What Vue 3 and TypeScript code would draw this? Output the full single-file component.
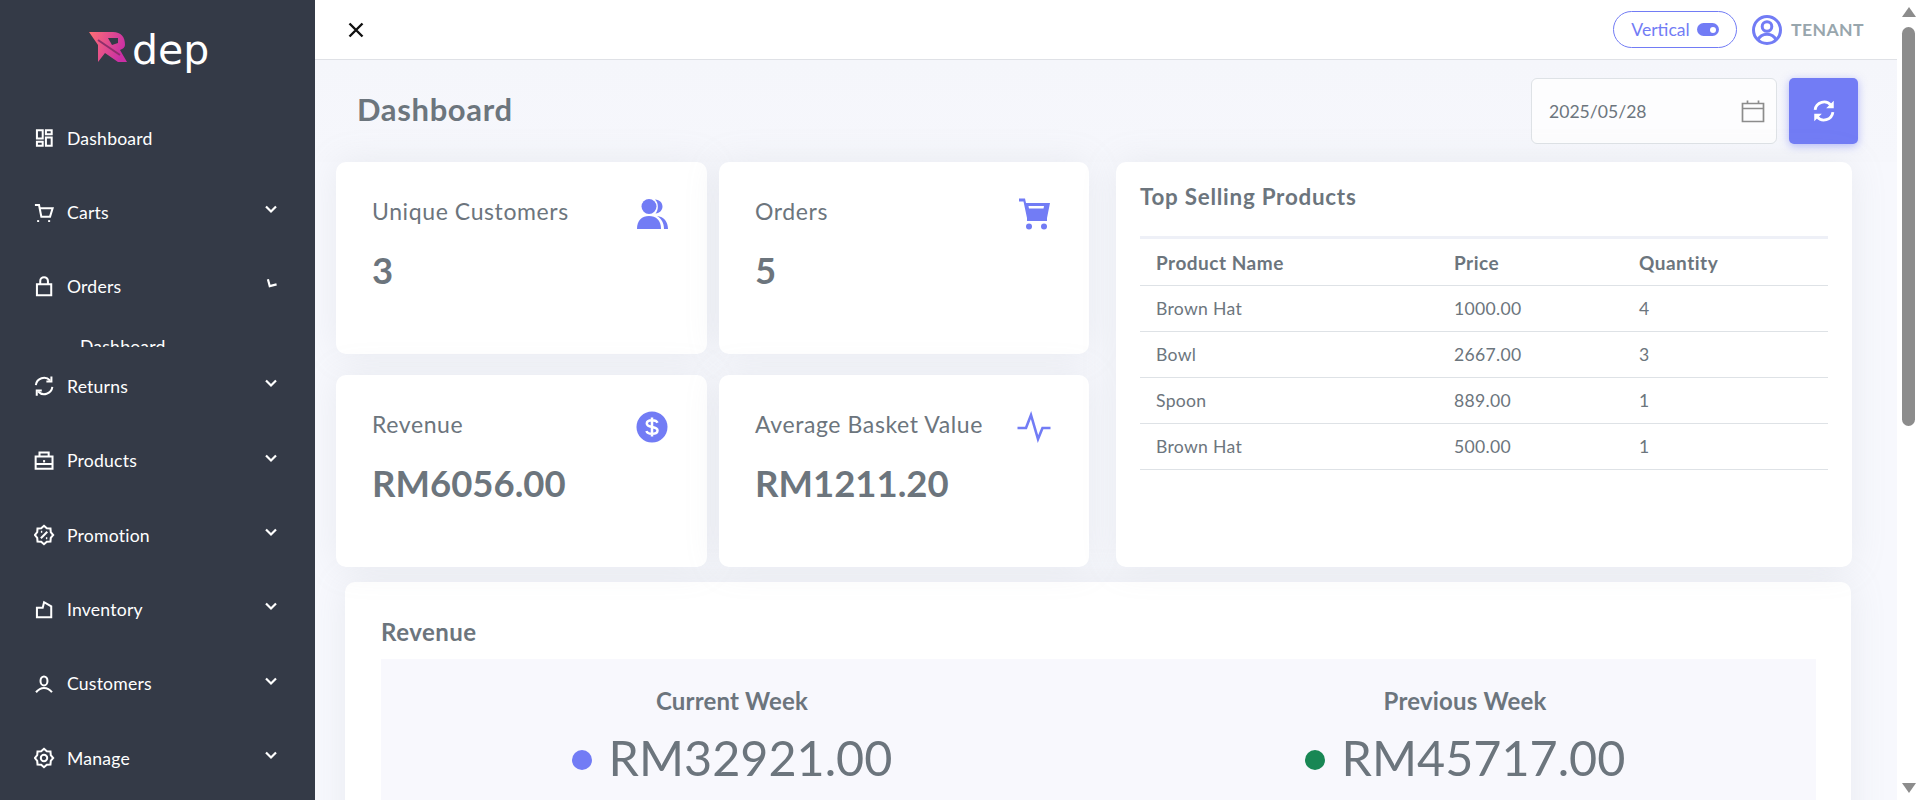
<template>
  <div class="layout">
    <aside class="sidebar">
      <div class="logo">
        <svg class="logo-mark" width="38" height="30" viewBox="0 0 38 30">
          <defs>
            <linearGradient id="rg" x1="0" y1="0" x2="1" y2="0.3">
              <stop offset="0" stop-color="#ff6f73" />
              <stop offset="1" stop-color="#c92fa5" />
            </linearGradient>
          </defs>
          <path fill="url(#rg)" d="M0 0H24C32 0 36 5 36 13C36 15 34 17 31 18L38 30H29L16 21L9 30V13Z" />
          <path fill="#343a47" d="M19 6H29V11L23 13Z" />
          <path fill="none" stroke="#8e2f6b" stroke-width="2" d="M9 8L31 23" />
        </svg>
        <span class="logo-text">dep</span>
      </div>
      <nav class="menu">
        <template v-for="item in menu" :key="item.name">
          <div class="menu-item">
            <svg class="menu-icon" width="22" height="22" viewBox="0 0 24 24" fill="none" stroke="#fff" stroke-width="2.2">
              <path v-for="d in item.icon" :key="d" :d="d" />
            </svg>
            <span class="menu-label">{{ item.name }}</span>
            <svg
              v-if="item.name !== 'Dashboard'"
              class="chevron"
              :class="{ turning: item.name === 'Orders' }"
              width="14"
              height="14"
              viewBox="0 0 14 14"
              fill="none"
              stroke="#fff"
              stroke-width="2.2"
            >
              <path d="M2 4.5L7 9.5L12 4.5" />
            </svg>
          </div>
          <div v-if="item.name === 'Orders'" class="submenu">
            <div class="submenu-clip"><span>Dashboard</span></div>
          </div>
        </template>
      </nav>
    </aside>

    <main class="main">
      <header class="topbar">
        <svg class="close" width="22" height="22" viewBox="0 0 22 22" stroke="#111" stroke-width="2.4" fill="none">
          <path d="M4.5 4.5L17.5 17.5M17.5 4.5L4.5 17.5" />
        </svg>
        <div class="topbar-right">
          <div class="pill">
            <span>Vertical</span>
            <span class="toggle"><i></i></span>
          </div>
          <svg class="avatar" width="32" height="32" viewBox="0 0 32 32" fill="none" stroke="#727cf5" stroke-width="3">
            <circle cx="16" cy="16" r="13.5" />
            <circle cx="16" cy="12.5" r="4.8" />
            <path d="M7 26C9 21 12 20.2 16 20.2S23 21 25 26" />
          </svg>
          <span class="tenant">TENANT</span>
        </div>
      </header>

      <div class="page-head">
        <h1>Dashboard</h1>
        <div class="date-box">
          <span>2025/05/28</span>
          <svg width="24" height="24" viewBox="0 0 24 24" fill="none" stroke="#8c8c8c" stroke-width="1.7">
            <path d="M1.5 4.5H22.5V22.5H1.5ZM1.5 9.5H22.5M6.5 1.5V4.5M17.5 1.5V4.5" />
          </svg>
        </div>
        <button class="refresh" type="button" aria-label="Refresh">
          <svg width="26" height="26" viewBox="0 0 24 24" fill="none" stroke="#fff" stroke-width="2.6">
            <path d="M3.8 11A8.3 8.3 0 0 1 18.5 6.8M20.2 13A8.3 8.3 0 0 1 5.5 17.2" />
            <path d="M21 2.5V9.5H14ZM3 21.5V14.5H10Z" stroke="none" fill="#fff" />
          </svg>
        </button>
      </div>

      <section class="overview">
        <div class="stats">
          <div v-for="s in stats" :key="s.label" class="card stat">
            <div class="stat-top">
              <span class="stat-label">{{ s.label }}</span>
              <svg class="stat-icon" width="34" height="34" viewBox="0 0 34 34" fill="#727cf5">
                <template v-if="s.kind === 'users'">
                  <circle cx="14" cy="9.5" r="7.5" />
                  <path d="M2 32C2 23 7 19 14 19S26 23 26 32Z" />
                  <path d="M20 2.5C25 2.8 27.5 6 27.5 9.5S25 16 20.5 16.5C23.5 13.5 24 6 20 2.5ZM22 19C29 19.5 33 25 33 32H29C29 26 26.5 21.5 22 19Z" />
                </template>
                <template v-else-if="s.kind === 'cart'">
                  <path d="M2 1.5H8L9 6H33L30 21H10L6.5 4.5H2Z" />
                  <path d="M11.5 9H27L26.5 11.5H12Z" fill="#fff" />
                  <path d="M10 21H30V24H10Z" />
                  <circle cx="12" cy="29.5" r="3" />
                  <circle cx="27" cy="29.5" r="3" />
                </template>
                <template v-else-if="s.kind === 'money'">
                  <circle cx="17" cy="17" r="15.5" />
                  <path d="M22.5 12.8C21.8 11 20 10.2 17 10.2C13.5 10.2 11.8 11.5 11.8 13.5C11.8 18.5 22.5 15.5 22.5 20.5C22.5 22.5 20.5 23.8 17 23.8C14 23.8 12 22.8 11.5 21M17 7.5V26.5" fill="none" stroke="#fff" stroke-width="2.5" />
                </template>
                <path v-else d="M0.5 18H9L14 5L21 29L25.5 18H33.5" fill="none" stroke="#727cf5" stroke-width="2.6" />
              </svg>
            </div>
            <div class="stat-value">{{ s.value }}</div>
          </div>
        </div>

        <div class="card top-products">
          <h2>Top Selling Products</h2>
          <table>
            <thead>
              <tr>
                <th class="col-name">Product Name</th>
                <th class="col-price">Price</th>
                <th>Quantity</th>
              </tr>
            </thead>
            <tbody>
              <tr v-for="(row, i) in products" :key="i">
                <td>{{ row.name }}</td>
                <td>{{ row.price }}</td>
                <td>{{ row.qty }}</td>
              </tr>
            </tbody>
          </table>
        </div>
      </section>

      <section class="card revenue">
        <h2>Revenue</h2>
        <div class="revenue-panel">
          <div v-for="w in weeks" :key="w.label" class="week">
            <div class="week-label">{{ w.label }}</div>
            <div class="week-value">
              <i class="dot" :style="{ background: w.color }"></i>
              <span>{{ w.value }}</span>
            </div>
          </div>
        </div>
      </section>
    </main>

    <div class="scrollbar">
      <i class="arrow up"></i>
      <div class="track"><div class="thumb"></div></div>
      <i class="arrow down"></i>
    </div>
  </div>
</template>

<script setup lang="ts">
interface MenuItem {
  name: string;
  icon: string[];
}

// scalloped outline for the promotion and settings icons
const badge = (cx: number, cy: number, outer: number, inner: number, lobes: number): string => {
  let d = '';
  for (let i = 0; i < lobes * 2; i++) {
    const r = i % 2 === 0 ? outer : inner;
    const a = (Math.PI * i) / lobes - Math.PI / 2;
    d += `${i === 0 ? 'M' : 'L'}${(cx + r * Math.cos(a)).toFixed(2)} ${(cy + r * Math.sin(a)).toFixed(2)}`;
  }
  return `${d}Z`;
};

const menu: MenuItem[] = [
  { name: 'Dashboard', icon: ['M3.2 3.5H9.5V12.5H3.2Z', 'M13 3.5H19.3V8H13Z', 'M3.2 16H9.5V20.5H3.2Z', 'M13 11.5H19.3V20.5H13Z'] },
  { name: 'Carts', icon: ['M1 3.2H5.5L8 16H17.5L20.3 6.9H6', 'M4.5 19.8V21.8', 'M16.5 19.8V21.8'] },
  { name: 'Orders', icon: ['M3.2 9H18.8V21H3.2Z', 'M6.8 9V5.5A4.2 4.2 0 0 1 15.2 5.5V9'] },
  { name: 'Returns', icon: ['M2 11A9 9 0 0 1 17.5 6', 'M20 13A9 9 0 0 1 4.5 18', 'M19 1.5V7H13.5', 'M3 22.5V17H8.5'] },
  { name: 'Products', icon: ['M1.8 7H20.2V20.5H1.8Z', 'M6 7V2.8H16V7', 'M1.8 15.3H20.2', 'M11 11V13.5'] },
  { name: 'Promotion', icon: [badge(10.9, 12, 10, 8, 8), 'M14.5 8.5L7.5 15.5', 'M7.5 8.5H9', 'M13 15.5H14.5'] },
  { name: 'Inventory', icon: ['M3.2 9.5H9.5L11 3.5L18.8 8V20H3.2Z'] },
  { name: 'Customers', icon: ['M7.1 8.7A3.8 5 0 0 1 14.7 8.7A3.8 5 0 0 1 7.1 8.7Z', 'M2.2 21C5 17.5 8 16.3 10.9 16.3S17 17.5 19.6 21'] },
  { name: 'Manage', icon: [badge(10.9, 12, 10, 8, 8), 'M7.4 12A3.5 3.5 0 0 1 14.4 12A3.5 3.5 0 0 1 7.4 12Z'] },
];

const stats = [
  { label: 'Unique Customers', value: '3', kind: 'users' },
  { label: 'Orders', value: '5', kind: 'cart' },
  { label: 'Revenue', value: 'RM6056.00', kind: 'money' },
  { label: 'Average Basket Value', value: 'RM1211.20', kind: 'pulse' },
];

const products = [
  { name: 'Brown Hat', price: '1000.00', qty: 4 },
  { name: 'Bowl', price: '2667.00', qty: 3 },
  { name: 'Spoon', price: '889.00', qty: 1 },
  { name: 'Brown Hat', price: '500.00', qty: 1 },
];

const weeks = [
  { label: 'Current Week', value: 'RM32921.00', color: '#727cf5' },
  { label: 'Previous Week', value: 'RM45717.00', color: '#198754' },
];
</script>

<style>
html,
body {
  margin: 0;
  overflow: hidden;
}
</style>

<style scoped>
.layout {
  display: flex;
  height: 800px;
  width: 1920px;
  overflow: hidden;
  font-family: Lato, 'Noto Sans', sans-serif;
  color: #6c757d;
}

.sidebar {
  width: 315px;
  flex: none;
  background: #343a47;
  color: #fff;
}

.logo {
  height: 101px;
  box-sizing: border-box;
  padding: 32px 0 0 89px;
  display: flex;
  align-items: flex-start;
  gap: 5px;
}

.logo-text {
  font-family: 'DejaVu Sans', sans-serif;
  font-size: 41px;
  line-height: 36px;
  color: #fff;
}

.menu-item {
  height: 74.4px;
  display: flex;
  align-items: center;
  padding-left: 34px;
  position: relative;
}

.menu-label {
  margin-left: 11px;
  font-size: 17.6px;
  letter-spacing: 0.2px;
}

.chevron {
  position: absolute;
  left: 264px;
  top: 27px;
}

.chevron.turning {
  transform: rotate(30deg);
}

.submenu {
  height: 25px;
}

.submenu-clip {
  height: 22.6px;
  overflow: hidden;
  padding-left: 80px;
  box-sizing: border-box;
  padding-top: 12px;
  font-size: 17.6px;
  line-height: 22px;
  letter-spacing: 0.2px;
}

.main {
  flex: 1;
  min-width: 0;
  height: 800px;
  overflow: hidden;
  background: #f7f8fd;
}

.topbar {
  height: 59px;
  background: #fff;
  border-bottom: 1px solid #dfe1e6;
  display: flex;
  align-items: center;
  justify-content: space-between;
  padding: 0 33px 0 30px;
}

.topbar-right {
  display: flex;
  align-items: center;
}

.pill {
  width: 124px;
  height: 37px;
  box-sizing: border-box;
  border: 1px solid #727cf5;
  border-radius: 19px;
  display: flex;
  align-items: center;
  justify-content: center;
  gap: 7px;
  color: #727cf5;
  font-size: 17.6px;
}

.toggle {
  width: 22px;
  height: 13px;
  border-radius: 7px;
  background: #727cf5;
  position: relative;
}

.toggle i {
  position: absolute;
  right: 3px;
  top: 3.5px;
  width: 6px;
  height: 6px;
  border-radius: 50%;
  background: #fff;
}

.avatar {
  margin-left: 14px;
}

.tenant {
  margin-left: 8px;
  font-size: 17.6px;
  font-weight: 700;
  color: #98a6ad;
  letter-spacing: 0.4px;
}

.page-head {
  display: flex;
  align-items: center;
  padding: 18px 39px 18px 42px;
  background: linear-gradient(180deg, #f5f6fb, #f6f7fc);
}

.page-head h1 {
  flex: 1;
  margin: -4px 0 0;
  font-size: 31px;
  font-weight: 700;
  letter-spacing: 0.65px;
  color: #6c757d;
}

.date-box {
  width: 246px;
  height: 66px;
  box-sizing: border-box;
  border: 1px solid #dee2e6;
  border-radius: 6px;
  background: #fdfdfe;
  display: flex;
  align-items: center;
  justify-content: space-between;
  padding: 0 11px 0 17px;
  font-size: 17.6px;
  color: #6c757d;
}

.refresh {
  width: 69px;
  height: 66px;
  margin-left: 12px;
  border: 0;
  border-radius: 5px;
  background: #727cf5;
  box-shadow: 0 2px 8px rgba(114, 124, 245, 0.5);
  display: flex;
  align-items: center;
  justify-content: center;
  padding: 0;
}

.card {
  background: #fff;
  border-radius: 10px;
  box-shadow: 0 0 35px rgba(154, 161, 171, 0.15);
}

.overview {
  display: grid;
  grid-template-columns: 753px 736px;
  column-gap: 27px;
  padding-left: 21px;
}

.stats {
  display: grid;
  grid-template-columns: 371px 370px;
  grid-auto-rows: 192px;
  column-gap: 12px;
  row-gap: 21px;
}

.stat {
  padding: 36px 38px 0 36px;
}

.stat-top {
  display: flex;
  justify-content: space-between;
  align-items: center;
  height: 32px;
}

.stat-label {
  margin-top: -6px;
  font-size: 23px;
  letter-spacing: 0.6px;
}

.stat-value {
  margin-top: 18px;
  font-size: 36.5px;
  line-height: 44px;
  font-weight: 700;
}

.top-products {
  padding: 21px 24px 0;
}

.top-products h2,
.revenue h2 {
  margin: 0;
  font-weight: 700;
}

.top-products h2 {
  font-size: 22.4px;
  letter-spacing: 0.75px;
  line-height: 28px;
}

table {
  width: 100%;
  margin-top: 25px;
  border-collapse: collapse;
  table-layout: fixed;
  border-top: 3px solid #eef0f7;
}

.col-name {
  width: 298px;
}

.col-price {
  width: 185px;
}

th,
td {
  box-sizing: border-box;
  padding: 0 16px;
  text-align: left;
  border-bottom: 1px solid #dee2e6;
  font-size: 17.6px;
  letter-spacing: 0.3px;
}

th {
  height: 48px;
  font-size: 19px;
  font-weight: 700;
  letter-spacing: 0.5px;
}

td {
  height: 46px;
}

.revenue {
  margin: 15px 46px 0 30px;
  padding: 36px 35px 0 36px;
  height: 400px;
}

.revenue h2 {
  font-size: 24px;
  letter-spacing: 0.5px;
  line-height: 28px;
}

.revenue-panel {
  margin-top: 13px;
  height: 320px;
  background: #f8f8fd;
  display: grid;
  grid-template-columns: 702px 702px;
  column-gap: 31px;
  align-content: start;
  padding-top: 26px;
  box-sizing: border-box;
}

.week {
  text-align: center;
}

.week-label {
  font-size: 24px;
  font-weight: 700;
  letter-spacing: 0.2px;
  line-height: 32px;
}

.week-value {
  margin-top: 10px;
  display: flex;
  align-items: center;
  justify-content: center;
  gap: 17px;
  font-size: 48.5px;
  line-height: 60px;
}

.dot {
  width: 20px;
  height: 20px;
  border-radius: 50%;
  margin-top: 6px;
}

.scrollbar {
  width: 23px;
  flex: none;
  background: #fff;
  display: flex;
  flex-direction: column;
  align-items: center;
  padding: 7px 0;
  box-sizing: border-box;
}

.track {
  flex: 1;
  padding-top: 10px;
}

.thumb {
  width: 13px;
  height: 399px;
  border-radius: 7px;
  background: #8c8c8c;
}

.arrow {
  width: 0;
  height: 0;
  border-left: 7px solid transparent;
  border-right: 7px solid transparent;
}

.arrow.up {
  border-bottom: 10px solid #8c8c8c;
}

.arrow.down {
  border-top: 10px solid #8c8c8c;
}
</style>
